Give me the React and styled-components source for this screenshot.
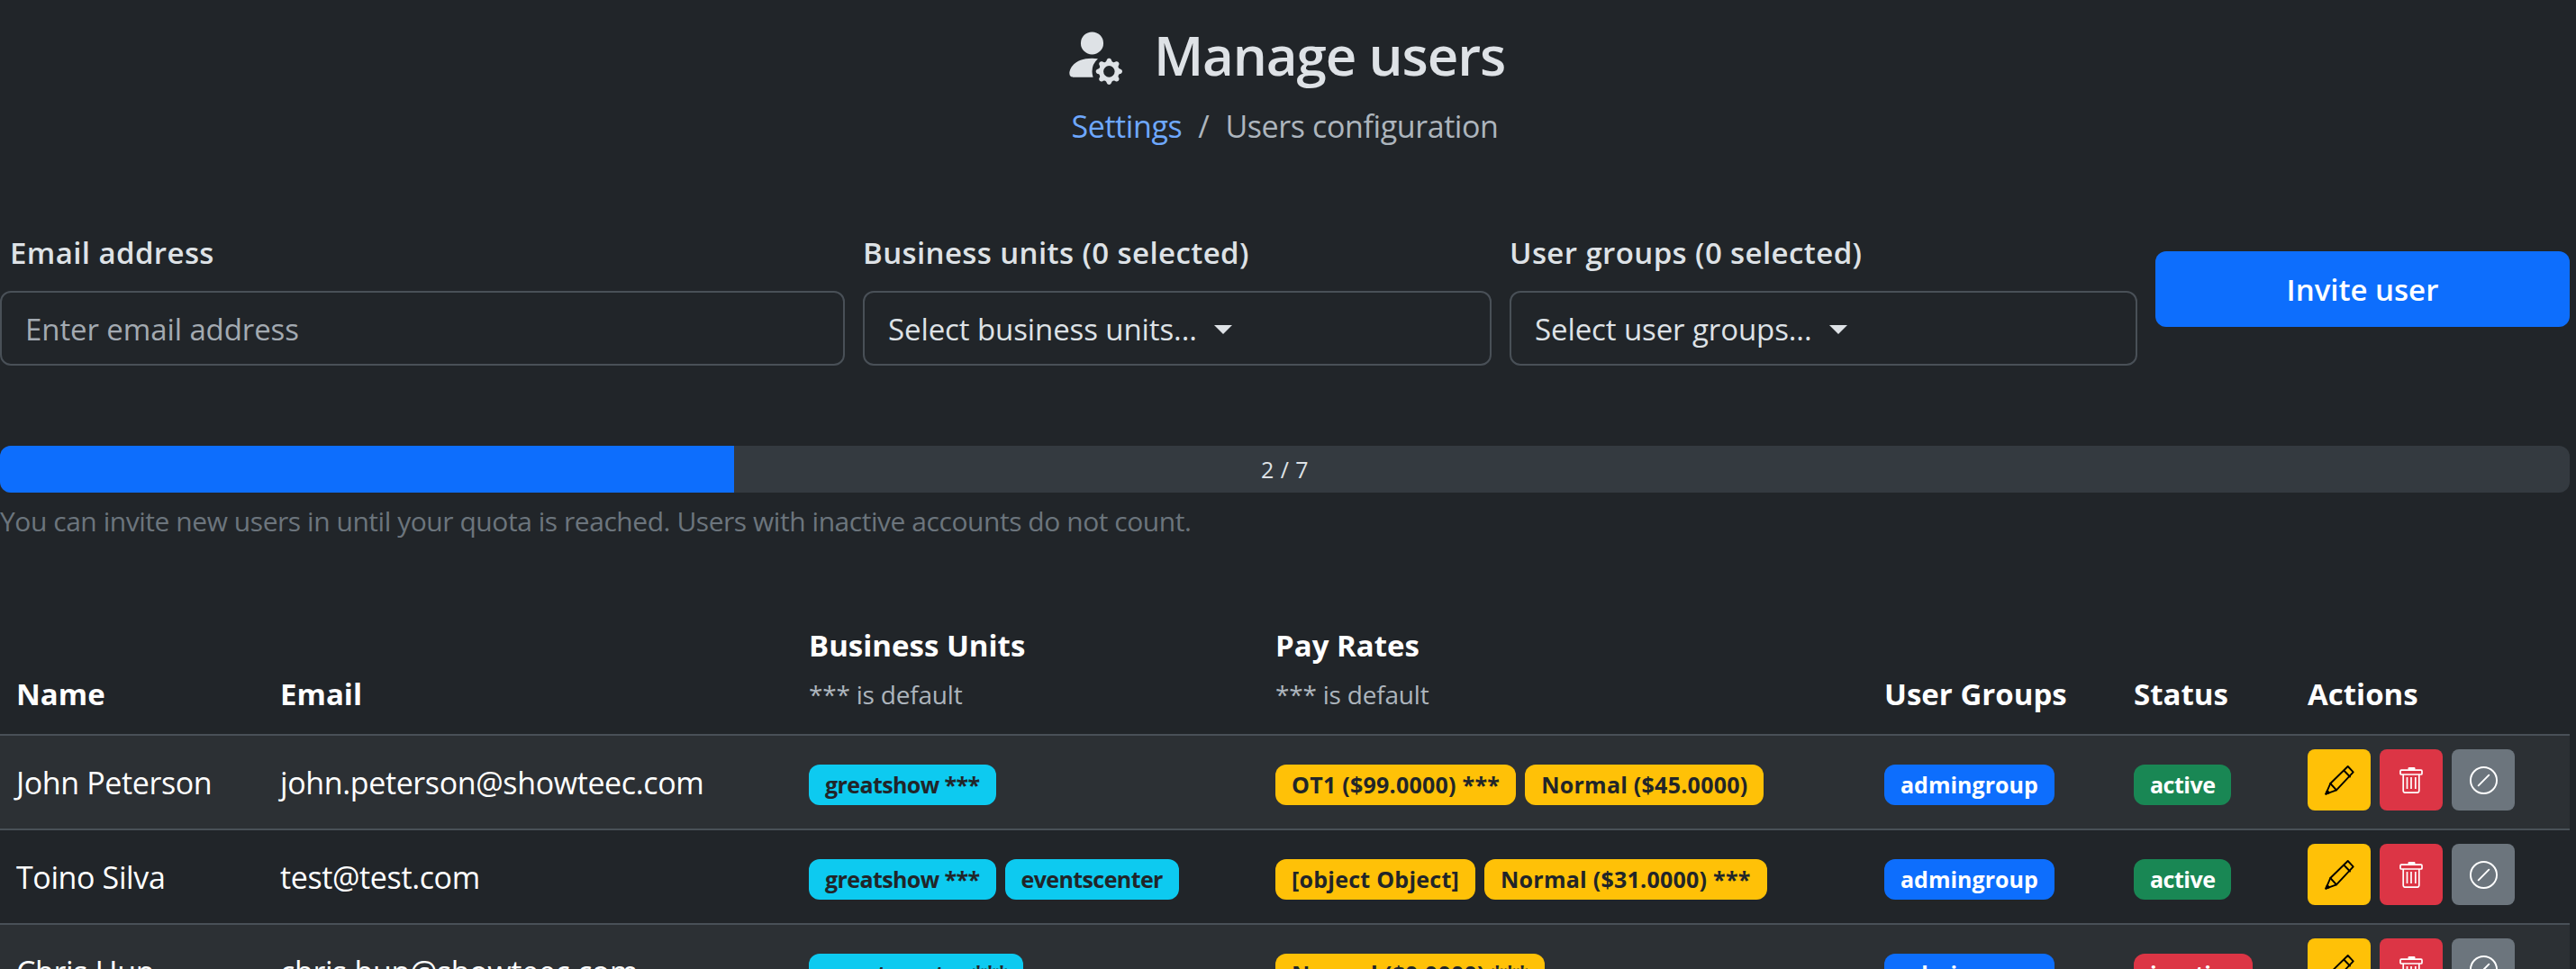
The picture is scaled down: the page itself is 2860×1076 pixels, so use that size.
import React from "react";
import styled, { createGlobalStyle } from "styled-components";
import { BsSlashCircle, BsPersonFillGear } from "react-icons/bs";

const Global = createGlobalStyle`
  html, body { margin: 0; padding: 0; background: #212529; height: 1076px; overflow: hidden; }
  * { box-sizing: border-box; }
`;
const F = `"Open Sans", "Noto Sans", sans-serif`;

const Page = styled.div`
  width: 2853px; height: 1076px; overflow: hidden; font-family: ${F}; color: #dee2e6; background: #212529;
`;
const Header = styled.header`
  display: flex; flex-direction: column; align-items: center; padding-top: 27px; height: 259px;
`;
const TitleRow = styled.h1`
  display: flex; align-items: center; gap: 35px; margin: 0 0 0 -3px; font-size: 60px; line-height: 64px; font-weight: 600; letter-spacing: -1.1px; color: #dee2e6;
  svg { width: 67px; height: 67px; display: block; }
`;
const Crumbs = styled.nav`
  display: flex; gap: 18px; margin-top: 24px; font-size: 34px; line-height: 44px; letter-spacing: -0.4px; color: #adb5bd;
`;
const CrumbLink = styled.a`color: #6ea8fe;`;
const InviteForm = styled.form`
  display: flex; gap: 20px; align-items: flex-start; height: 236px;
`;
const Field = styled.div`
  width: ${p => p.$w}px; flex: none;
`;
const Label = styled.label`
  display: block; height: 64px; padding-left: ${p => p.$pad || 0}px; font-size: 33px; line-height: 44px; font-weight: 600; letter-spacing: 0.4px; color: #dee2e6;
`;
const Input = styled.div`
  height: 83px; border: 2px solid #495057; border-radius: 12px; padding: 2px 26px 0; display: flex; align-items: center; font-size: 33px; letter-spacing: -0.1px; color: #dee2e6;
`;
const Placeholder = styled.span`color: #a3aab1;`;
const Caret = styled.i`
  display: inline-block; margin-left: 19px; border-top: 10px solid #dee2e6; border-left: 10px solid transparent; border-right: 10px solid transparent;
`;
const InviteButton = styled.button`
  width: 460px; height: 84px; margin-top: 20px; flex: none; border: 0; border-radius: 12px; background: #0d6efd; color: #fff; font-family: ${F}; font-size: 33px; font-weight: 600; letter-spacing: 0;
`;
const Progress = styled.div`
  position: relative; height: 52px; border-radius: 12px; background: #343a40; overflow: hidden; display: flex; align-items: center; justify-content: center;
`;
const Bar = styled.div`
  position: absolute; left: 0; top: 0; bottom: 0; background: #0d6efd;
`;
const ProgressLabel = styled.span`
  position: relative; font-size: 25px; letter-spacing: 0.5px; color: #dee2e6;
`;
const Help = styled.p`
  margin: 12px 0 0; font-size: 30px; line-height: 40px; letter-spacing: -0.45px; color: #6c757d;
`;
const Table = styled.table`
  margin-top: 91px; width: 2853px; table-layout: fixed; border-collapse: collapse;
`;
const Th = styled.th`
  padding: 0 18px 17px; text-align: left; vertical-align: bottom; font-size: 33px; line-height: 54px; font-weight: 700; letter-spacing: 0; color: #fff; border-bottom: 2px solid #495057;
`;
const Sub = styled.div`
  font-size: 28px; font-weight: 400; line-height: 54px; letter-spacing: -0.2px; color: #adb5bd;
`;
const Tr = styled.tr`
  background: ${p => (p.$odd ? "#2c3034" : "transparent")};
`;
const Td = styled.td`
  height: 105px; padding: 0 18px; font-size: 34px; letter-spacing: -0.38px; color: #fff; border-bottom: 2px solid #495057; vertical-align: middle; white-space: nowrap;
`;
const Badges = styled.div`
  display: flex; gap: 10px; padding-top: 5px;
`;
const Badge = styled.span`
  height: 45px; display: inline-flex; align-items: center; padding: 0 18px; border-radius: 12px; font-size: 25px; font-weight: 700;
  letter-spacing: ${p => p.$ls}px; background: ${p => p.$bg}; color: ${p => p.$fg};
`;
const Actions = styled.div`
  display: flex; gap: 10px; margin-top: -5px;
`;
const ActionBtn = styled.button`
  width: 70px; height: 68px; border: 0; border-radius: 8px; padding: 0; display: flex; align-items: center; justify-content: center; background: ${p => p.$bg}; color: ${p => p.$fg};
  svg { display: block; }
`;

const PencilIcon = () => (
  <svg width="35" height="35" viewBox="0 0 35 35" fill="none" stroke="currentColor" strokeWidth="1.9" strokeLinejoin="round" strokeLinecap="round">
    <path d="M26.7 2 L32.7 8.3 L14 28.3 L2.3 32.7 L7.3 21 Z" />
    <path d="M22.7 7 L29 13.5" />
    <path d="M7.3 21 L14 28.3" />
    <path d="M2.3 32.7 L6 31.3 L3.8 29 Z" fill="currentColor" />
  </svg>
);
const TrashIcon = () => (
  <svg width="26" height="29" viewBox="0 0 26 29" fill="none" stroke="currentColor" strokeWidth="1.7">
    <rect x="9.5" y="0" width="8" height="3" rx="1.2" fill="currentColor" stroke="none" />
    <rect x="1" y="3.2" width="24" height="4.8" rx="1" />
    <path d="M4.2 8 V26 a2.2 2.2 0 0 0 2.2 2.2 H19.6 a2.2 2.2 0 0 0 2.2 -2.2 V8" />
    <path d="M8.5 11 V24 M13 11 V24 M17.8 11 V24" />
  </svg>
);

const cyan = { bg: "#0dcaf0", fg: "#212529", ls: -0.6 };
const yellow = { bg: "#ffc107", fg: "#212529", ls: 0.25 };
const blue = { bg: "#0d6efd", fg: "#fff", ls: 0 };
const green = { bg: "#198754", fg: "#fff", ls: -0.5 };
const red = { bg: "#dc3545", fg: "#fff", ls: -0.5 };
const users = [
  { name: "John Peterson", email: "john.peterson@showteec.com", units: ["greatshow ***"], rates: ["OT1 ($99.0000) ***", "Normal ($45.0000)"], status: "active" },
  { name: "Toino Silva", email: "test@test.com", units: ["greatshow ***", "eventscenter"], rates: ["[object Object]", "Normal ($31.0000) ***"], status: "active" },
  { name: "Chris Hun", email: "chris.hun@showteec.com", units: ["eventscenter ***"], rates: ["Normal ($0.0000) ***"], status: "inactive" },
];
const cols = [293, 587, 518, 676, 277, 193, 309];

const Tag = ({ c, children }) => <Badge $bg={c.bg} $fg={c.fg} $ls={c.ls}>{children}</Badge>;

export default function App() {
  return (
    <Page>
      <Global />
      <Header>
        <TitleRow><BsPersonFillGear />Manage users</TitleRow>
        <Crumbs><CrumbLink>Settings</CrumbLink><span>/</span><span>Users configuration</span></Crumbs>
      </Header>
      <InviteForm>
        <Field $w={938}>
          <Label $pad={11}>Email address</Label>
          <Input><Placeholder>Enter email address</Placeholder></Input>
        </Field>
        <Field $w={698}>
          <Label>Business units (0 selected)</Label>
          <Input>Select business units...<Caret /></Input>
        </Field>
        <Field $w={697}>
          <Label>User groups (0 selected)</Label>
          <Input>Select user groups...<Caret /></Input>
        </Field>
        <InviteButton type="button">Invite user</InviteButton>
      </InviteForm>
      <Progress>
        <Bar style={{ width: `${(2 / 7) * 100}%` }} />
        <ProgressLabel>2 / 7</ProgressLabel>
      </Progress>
      <Help>You can invite new users in until your quota is reached. Users with inactive accounts do not count.</Help>
      <Table>
        <colgroup>{cols.map((w, i) => <col key={i} width={w} />)}</colgroup>
        <thead>
          <tr>
            <Th>Name</Th>
            <Th>Email</Th>
            <Th>Business Units<Sub>*** is default</Sub></Th>
            <Th>Pay Rates<Sub>*** is default</Sub></Th>
            <Th>User Groups</Th>
            <Th>Status</Th>
            <Th>Actions</Th>
          </tr>
        </thead>
        <tbody>
          {users.map((u, i) => (
            <Tr key={u.name} $odd={i % 2 === 0}>
              <Td>{u.name}</Td>
              <Td>{u.email}</Td>
              <Td><Badges>{u.units.map(t => <Tag key={t} c={cyan}>{t}</Tag>)}</Badges></Td>
              <Td><Badges>{u.rates.map(t => <Tag key={t} c={yellow}>{t}</Tag>)}</Badges></Td>
              <Td><Badges><Tag c={blue}>admingroup</Tag></Badges></Td>
              <Td><Badges><Tag c={u.status === "active" ? green : red}>{u.status}</Tag></Badges></Td>
              <Td>
                <Actions>
                  <ActionBtn $bg="#ffc107" $fg="#000"><PencilIcon /></ActionBtn>
                  <ActionBtn $bg="#dc3545" $fg="#fff"><TrashIcon /></ActionBtn>
                  <ActionBtn $bg="#6c757d" $fg="#fff"><BsSlashCircle size={31} /></ActionBtn>
                </Actions>
              </Td>
            </Tr>
          ))}
        </tbody>
      </Table>
    </Page>
  );
}
